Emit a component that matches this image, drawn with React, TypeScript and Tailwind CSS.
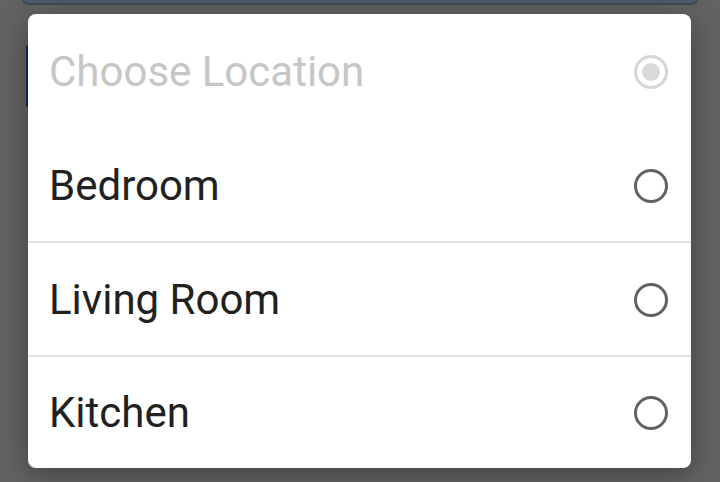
import React from "react";

const options = ["Bedroom", "Living Room", "Kitchen"];

const Radio = ({ selected = false, disabled = false }: { selected?: boolean; disabled?: boolean }) => {
  const ring = disabled ? "border-[#d6d6d6]" : "border-[#5f6368]";
  return (
    <div className={`w-[34px] h-[34px] rounded-full border-[3px] ${ring} flex items-center justify-center shrink-0`}>
      {selected && <div className="w-[18px] h-[18px] rounded-full bg-[#d9d9d9]" />}
    </div>
  );
};

const App = () => {
  return (
    <div
      className="relative w-[720px] h-[482px] overflow-hidden bg-[#636363]"
      style={{ fontFamily: "Roboto, 'Noto Sans', sans-serif" }}
    >
      {/* page behind the dimmed overlay */}
      <div className="px-[22px]">
        <div className="h-[6px] -mt-[1px] rounded-b-[10px] border-2 border-t-0 border-[#3f4a5a] bg-[#4f5b6c]" />
        <div className="mt-[40px] ml-[4px] w-[3px] h-[62px] bg-[#0c2f5a] rounded-sm" />
      </div>

      {/* dialog */}
      <div className="absolute left-[28px] top-[14px] w-[663px] h-[454px] bg-white rounded-[8px] shadow-[0_6px_30px_rgba(0,0,0,0.35)] flex flex-col">
        <div className="h-[114px] flex items-center justify-between pl-[21px] pr-[23px] pt-[2px]">
          <span className="text-[42px] text-[#c6c6c6] leading-none">Choose Location</span>
          <Radio selected disabled />
        </div>
        {options.map((opt, i) => (
          <div key={opt} className="flex flex-col flex-1">
            {i > 0 && <div className="h-[2px] bg-[#e2e2e2]" />}
            <div className="flex-1 flex items-center justify-between pl-[21px] pr-[23px] pt-[2px]">
              <span className="text-[42px] text-[#212121] leading-none">{opt}</span>
              <Radio />
            </div>
          </div>
        ))}
      </div>
    </div>
  );
};

export default App;
